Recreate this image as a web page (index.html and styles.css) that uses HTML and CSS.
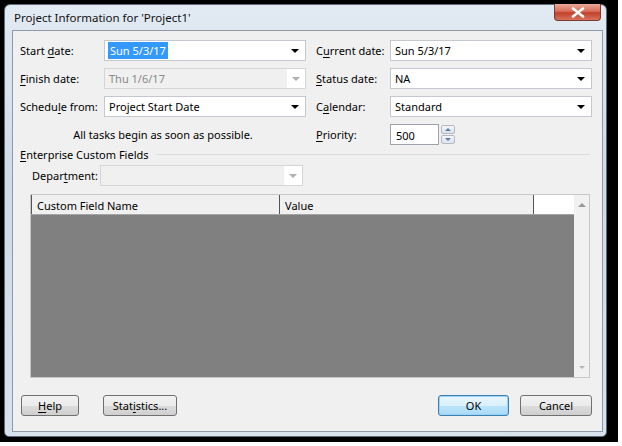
FILE: index.html
```html
<!DOCTYPE html>
<html lang="en">
<head>
  <meta charset="UTF-8">
  <title>Project Information</title>
  <link rel="stylesheet" href="styles.css">
</head>
<body>
  <div class="screen">
    <div class="window">
      <div class="titlebar">
        <span class="title">Project Information for 'Project1'</span>
        <div class="close">
          <svg width="14" height="11" viewBox="0 0 14 11"><path d="M2 1.5 L12 9.5 M12 1.5 L2 9.5" stroke="#fff" stroke-width="2.6" stroke-linecap="round"/></svg>
        </div>
      </div>
      <div class="client">
        <div class="fields">
          <label class="lbl">Start <u>d</u>ate:</label>
          <div class="combo"><span class="sel">Sun 5/3/17</span><i class="arrow"></i></div>
          <label class="lbl r">C<u>u</u>rrent date:</label>
          <div class="combo"><span>Sun 5/3/17</span><i class="arrow"></i></div>

          <label class="lbl"><u>F</u>inish date:</label>
          <div class="combo off"><span>Thu 1/6/17</span><i class="arrow"></i></div>
          <label class="lbl r"><u>S</u>tatus date:</label>
          <div class="combo"><span>NA</span><i class="arrow"></i></div>

          <label class="lbl">Schedu<u>l</u>e from:</label>
          <div class="combo"><span>Project Start Date</span><i class="arrow"></i></div>
          <label class="lbl r">C<u>a</u>lendar:</label>
          <div class="combo"><span>Standard</span><i class="arrow"></i></div>

          <div class="note">All tasks begin as soon as possible.</div>
          <label class="lbl r"><u>P</u>riority:</label>
          <div class="spin">
            <div class="spin-box">500</div>
            <div class="spin-btns">
              <div class="sb"><i class="up"></i></div>
              <div class="sb"><i class="down"></i></div>
            </div>
          </div>
        </div>

        <div class="group">
          <span><u>E</u>nterprise Custom Fields</span>
          <div class="rule"></div>
        </div>

        <div class="dept">
          <label class="lbl">Depar<u>t</u>ment:</label>
          <div class="combo off"><span></span><i class="arrow"></i></div>
        </div>

        <div class="grid">
          <div class="grid-main">
            <div class="grid-head">
              <div class="col c1">Custom Field Name</div>
              <div class="col c2">Value</div>
              <div class="col c3"></div>
            </div>
            <div class="grid-body"></div>
          </div>
          <div class="vscroll">
            <i class="up"></i>
            <i class="down"></i>
          </div>
        </div>

        <div class="buttons">
          <button class="btn help"><u>H</u>elp</button>
          <button class="btn stats">Stat<u>i</u>stics...</button>
          <div class="spacer"></div>
          <button class="btn ok">OK</button>
          <button class="btn cancel">Cancel</button>
        </div>
      </div>
    </div>
  </div>
</body>
</html>
```

FILE: styles.css
```css
body {
  margin: 0;
  background: #fff;
  font-family: "Noto Sans", "Open Sans", sans-serif;
  font-size: 11px;
  color: #000;
}
u {
  text-decoration: underline;
  text-underline-offset: 2px;
}
.screen {
  width: 618px;
  height: 442px;
  background: #000;
  padding: 4px 0 0 4px;
  box-sizing: border-box;
}
.window {
  width: 603px;
  height: 433px;
  box-sizing: border-box;
  border: 1px solid #5d6b7a;
  border-radius: 6px 6px 5px 5px;
  background: linear-gradient(#e2eaf3, #cfdbe8 40%, #d8e2ed);
  padding: 0 3px 4px 7px;
  display: flex;
  flex-direction: column;
}
.titlebar {
  height: 25px;
  display: flex;
  align-items: center;
  position: relative;
}
.title {
  padding-left: 2px;
  font-size: 11.5px;
  color: #111;
}
.close {
  position: absolute;
  right: 2px;
  top: -1px;
  width: 47px;
  height: 17px;
  box-sizing: border-box;
  border: 1px solid #7a3a30;
  border-top: none;
  border-radius: 0 0 4px 4px;
  background: linear-gradient(#e9a99a, #d8705b 45%, #c2412a 55%, #d5735c);
  display: flex;
  align-items: center;
  justify-content: center;
}
.client {
  flex: 1;
  background: #f0f0f0;
  border: 1px solid #8e9aa8;
  padding: 9px 10px 0 7px;
  display: flex;
  flex-direction: column;
}
.fields {
  display: grid;
  grid-template-columns: 84px 202px 84px 202px;
  row-gap: 7px;
  align-items: center;
}
.lbl {
  white-space: nowrap;
}
.lbl.r {
  padding-left: 10px;
}
.combo {
  height: 21px;
  box-sizing: border-box;
  border: 1px solid #c5c9cf;
  background: #fff;
  display: flex;
  align-items: center;
  padding-left: 3px;
  position: relative;
}
.combo span {
  flex: 1;
  padding-left: 1px;
}
.combo .sel {
  flex: none;
  background: #3399ff;
  color: #fff;
  padding: 1px 2px;
}
.arrow {
  width: 0;
  height: 0;
  border-left: 4px solid transparent;
  border-right: 4px solid transparent;
  border-top: 4px solid #000;
  margin: 0 6px 0 auto;
}
.combo.off {
  background: #f0f0f0;
  border-color: #d5d5d5;
  color: #8a8a8a;
  padding-right: 0;
}
.combo.off .arrow {
  margin: 0;
  width: 18px;
  height: 19px;
  border: none;
  background: #fff;
  position: relative;
}
.combo.off .arrow::after {
  content: "";
  position: absolute;
  left: 5px;
  top: 8px;
  border-left: 4px solid transparent;
  border-right: 4px solid transparent;
  border-top: 4px solid #b0b0b0;
}
.note {
  grid-column: 1 / 3;
  text-align: center;
}
.spin {
  display: flex;
  align-items: center;
}
.spin-box {
  width: 49px;
  height: 21px;
  box-sizing: border-box;
  border: 1px solid #9ea3aa;
  background: #fff;
  padding: 3px 0 0 5px;
}
.spin-btns {
  margin-left: 2px;
  display: flex;
  flex-direction: column;
  gap: 1px;
}
.sb {
  width: 14px;
  height: 9px;
  box-sizing: border-box;
  border: 1px solid #b5bac2;
  border-radius: 2px;
  background: linear-gradient(#f4f6f9, #dde3ea);
  display: flex;
  align-items: center;
  justify-content: center;
}
.up, .down {
  display: block;
  width: 0;
  height: 0;
  border-left: 3px solid transparent;
  border-right: 3px solid transparent;
}
.up {
  border-bottom: 3px solid #5a7ea8;
}
.down {
  border-top: 3px solid #5a7ea8;
}
.group {
  display: flex;
  align-items: center;
  margin-top: 1px;
  height: 16px;
}
.rule {
  flex: 1;
  height: 1px;
  background: #dcdcdc;
  margin-left: 7px;
  margin-right: 2px;
}
.dept {
  display: flex;
  align-items: center;
  margin: 3px 0 0 12px;
}
.dept .lbl {
  width: 68px;
}
.dept .combo {
  width: 203px;
}
.grid {
  margin: 8px 2px 0 10px;
  height: 184px;
  box-sizing: border-box;
  border: 1px solid #c8c8c8;
  display: flex;
  background: #f7f7f7;
}
.grid-main {
  flex: 1;
  display: flex;
  flex-direction: column;
}
.grid-head {
  height: 19px;
  display: flex;
  border-bottom: 1px solid #a5a5a5;
}
.col {
  box-sizing: border-box;
  padding: 3px 0 0 5px;
  background: #f0f0f0;
}
.c1 {
  width: 249px;
  border-left: 1px solid #555;
  border-right: 1px solid #555;
}
.c2 {
  width: 254px;
  border-right: 1px solid #555;
}
.c3 {
  flex: 1;
  background: #fff;
}
.grid-body {
  flex: 1;
  background: #808080;
}
.vscroll {
  width: 15px;
  background: #f1f1f1;
  display: flex;
  flex-direction: column;
  justify-content: space-between;
  align-items: center;
  padding: 8px 0 8px;
}
.vscroll .up {
  border-bottom-color: #9a9a9a;
  border-left-width: 4px;
  border-right-width: 4px;
  border-bottom-width: 4px;
}
.vscroll .down {
  border-top-color: #b5b5b5;
}
.buttons {
  display: flex;
  margin-top: 17px;
  gap: 24px;
  padding-left: 1px;
}
.spacer {
  flex: 1;
}
.btn {
  height: 21px;
  font-family: inherit;
  font-size: 11px;
  color: #000;
  border: 1px solid #707070;
  border-radius: 3px;
  background: linear-gradient(#f2f2f2, #ebebeb 50%, #dddddd 51%, #cfcfcf);
  padding: 0;
}
.help { width: 58px; }
.stats { width: 74px; }
.ok {
  width: 71px;
  border-color: #3c7fb1;
  background: linear-gradient(#eaf6fd, #d9f0fc 50%, #bee6fd 51%, #a7d9f5);
  box-shadow: inset 0 0 0 1px #9cd3f3;
}
.cancel {
  width: 72px;
  margin-left: -13px;
}
```
